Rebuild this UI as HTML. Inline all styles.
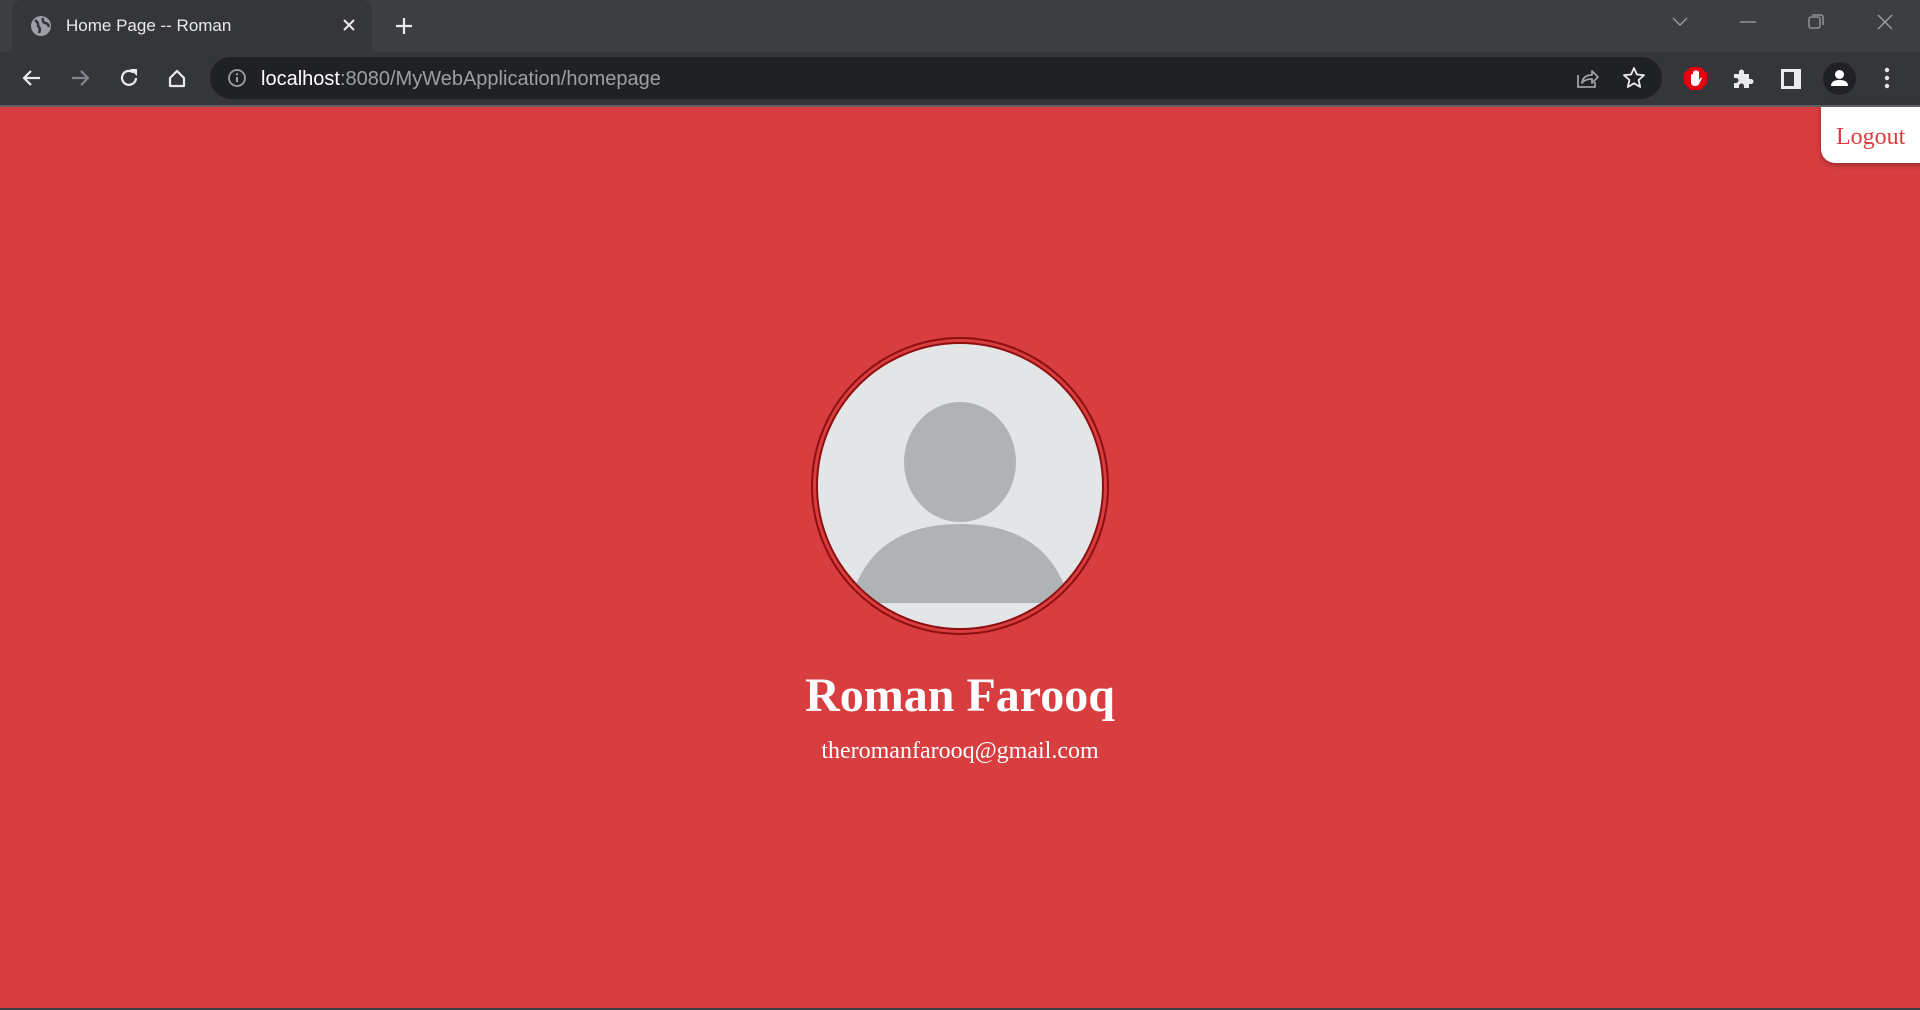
<!DOCTYPE html>
<html><head><meta charset="utf-8"><style>
*{margin:0;padding:0;box-sizing:border-box}
body{width:1920px;height:1010px;overflow:hidden;background:#d83d3f;font-family:"Liberation Sans",sans-serif;position:relative}
.strip{position:absolute;left:0;top:0;width:1920px;height:52px;background:#3c3f42}
.tab{position:absolute;left:12px;top:0;width:360px;height:52px;background:#35363a;border-radius:10px 10px 0 0}
.tab .t{position:absolute;left:54px;top:16px;color:#e8eaed;font-size:17px}
.tool{position:absolute;left:0;top:52px;width:1920px;height:53px;background:#35363a}
.line{position:absolute;left:0;top:105px;width:1920px;height:2px;background:#5f6368}
.omni{position:absolute;left:210px;top:57px;width:1452px;height:42px;background:#202124;border-radius:21px}
.url{position:absolute;left:51px;top:11px;font-size:20px;color:#9aa0a6}
.url b{font-weight:normal;color:#fff}
svg{position:absolute}
.bottom{position:absolute;left:0;top:1008px;width:1920px;height:2px;background:#3c3f42}
.logout{position:absolute;left:1821px;top:107px;width:110px;height:56px;background:#fff;border-radius:0 0 0 14px;box-shadow:0 2px 6px rgba(0,0,0,.3);font-family:"Liberation Serif",serif;font-size:24px;color:#d83d3f;padding:17px 0 0 15px}
.ring{position:absolute;left:811px;top:337px;width:298px;height:298px;border-radius:50%;border:2px solid #8e0f10;padding:3px;background:#d83d3f}
.inner{width:100%;height:100%;border-radius:50%;border:2px solid #8e0f10;background:#e4e5e7;overflow:hidden;position:relative}
.name{position:absolute;left:0;width:1920px;top:668px;text-align:center;color:#fff;font-family:"Liberation Serif",serif;font-weight:bold;font-size:48px}
.email{position:absolute;left:0;width:1920px;top:738px;text-align:center;color:#fff;font-family:"Liberation Serif",serif;font-size:24px}
</style></head><body>
<div class="strip"></div>
<div class="tab"><svg style="left:18px;top:15px" width="22" height="22" viewBox="0 0 22 22"><circle cx="11" cy="11" r="10" fill="#9aa0a6"/><path d="M5 5 Q9 8 8 11 Q11 13 9 18 M13 3 Q12 7 15 8 Q18 8 19 12" stroke="#35363a" stroke-width="2.5" fill="none"/></svg><div class="t">Home Page -- Roman</div>
<svg style="left:330px;top:18px" width="14" height="14"><path d="M2 2L12 12M12 2L2 12" stroke="#e8eaed" stroke-width="2"/></svg></div>
<svg style="left:394px;top:16px" width="20" height="20"><path d="M10 2V18M2 10H18" stroke="#e8eaed" stroke-width="2.2"/></svg>
<svg style="left:1670px;top:14px" width="20" height="14"><path d="M3 4L10 11L17 4" stroke="#9aa0a6" stroke-width="1.3" fill="none"/></svg>
<svg style="left:1738px;top:14px" width="20" height="14"><path d="M2 8H18" stroke="#9aa0a6" stroke-width="1.3"/></svg>
<svg style="left:1806px;top:12px" width="20" height="20"><rect x="3" y="5" width="11" height="11" rx="2" stroke="#9aa0a6" fill="none" stroke-width="1.3"/><path d="M6 3H15Q17 3 17 5V13" stroke="#9aa0a6" fill="none" stroke-width="1.3"/></svg>
<svg style="left:1875px;top:12px" width="20" height="20"><path d="M3 3L17 17M17 3L3 17" stroke="#9aa0a6" stroke-width="1.3"/></svg>
<div class="tool"></div><div class="line"></div>
<svg style="left:20px;top:66px" width="24" height="24"><path d="M20 12H5M11 5L4 12L11 19" stroke="#e8eaed" stroke-width="2.2" fill="none"/></svg>
<svg style="left:68px;top:66px" width="24" height="24"><path d="M4 12H19M13 5L20 12L13 19" stroke="#80868b" stroke-width="2.2" fill="none"/></svg>
<svg style="left:117px;top:66px" width="24" height="24"><path d="M19 12A7 7 0 1 1 16.5 6.5" stroke="#e8eaed" stroke-width="2.2" fill="none"/><path d="M13 3H20V10Z" fill="#e8eaed"/></svg>
<svg style="left:165px;top:66px" width="24" height="24"><path d="M5 12L12 5L19 12V20H5Z" stroke="#e8eaed" stroke-width="2.2" fill="none" stroke-linejoin="round"/></svg>
<div class="omni"><svg style="left:17px;top:11px" width="20" height="20"><circle cx="10" cy="10" r="8" stroke="#9aa0a6" stroke-width="1.8" fill="none"/><path d="M10 9V14" stroke="#9aa0a6" stroke-width="2"/><circle cx="10" cy="6.3" r="1.2" fill="#9aa0a6"/></svg>
<div class="url"><b>localhost</b>:8080/MyWebApplication/homepage</div>
<svg style="left:1365px;top:9px" width="26" height="24"><path d="M3 9V21H20V16" stroke="#9aa0a6" stroke-width="1.8" fill="none"/><path d="M7 17Q8 9 17 9V5L23 11L17 17V13Q10 13 7 17Z" stroke="#9aa0a6" stroke-width="1.8" fill="none" stroke-linejoin="round"/></svg>
<svg style="left:1412px;top:9px" width="24" height="24"><path d="M12 2L14.9 8.5L22 9.2L16.6 14L18.2 21L12 17.3L5.8 21L7.4 14L2 9.2L9.1 8.5Z" stroke="#e8eaed" stroke-width="1.8" fill="none" stroke-linejoin="round"/></svg></div>
<svg style="left:1683px;top:66px" width="25" height="25"><path d="M7.5 1H17.5L24 7.5V17.5L17.5 24H7.5L1 17.5V7.5Z" fill="#e3000f"/><path d="M8 14V9Q8 8 9 8T10 9V13V6Q10 5 11 5T12 6V12V5Q12 4 13 4T14 5V12V6Q14 5 15 5T16 6V14L17.5 12Q18.5 11 19 12L16 18Q15 20 12 20Q8 20 8 16Z" fill="#fff"/></svg>
<svg style="left:1731px;top:66px" width="24" height="24"><path d="M3 8H8V6A2.5 2.5 0 0 1 13 6V8H18V13H20A2.5 2.5 0 0 1 20 18H18V22H13V20A2.5 2.5 0 0 0 8 20V22H3V17H5A2.5 2.5 0 0 0 5 12H3Z" fill="#e8eaed"/></svg>
<svg style="left:1779px;top:67px" width="24" height="24"><rect x="2" y="2" width="20" height="20" fill="#e8eaed"/><rect x="5" y="5" width="10" height="14" fill="#35363a"/></svg>
<svg style="left:1823px;top:62px" width="33" height="33"><circle cx="16.5" cy="16.5" r="16.5" fill="#202124"/><circle cx="16.5" cy="12.5" r="4.5" fill="#fff"/><path d="M8 24Q8 18 16.5 18Q25 18 25 24Z" fill="#fff"/></svg>
<svg style="left:1880px;top:66px" width="14" height="24"><circle cx="7" cy="4" r="2.2" fill="#e8eaed"/><circle cx="7" cy="12" r="2.2" fill="#e8eaed"/><circle cx="7" cy="20" r="2.2" fill="#e8eaed"/></svg>
<div class="logout">Logout</div>
<div class="ring"><div class="inner">
<svg style="left:0;top:0" width="284" height="284" viewBox="0 0 284 284"><ellipse cx="142" cy="118" rx="56" ry="60" fill="#afb3b6"/><path d="M32 259Q52 180 142 180Q232 180 252 259Z" fill="#afb3b6"/></svg>
</div></div>
<div class="name">Roman Farooq</div>
<div class="email">theromanfarooq@gmail.com</div>
<div class="bottom"></div>
</body></html>
